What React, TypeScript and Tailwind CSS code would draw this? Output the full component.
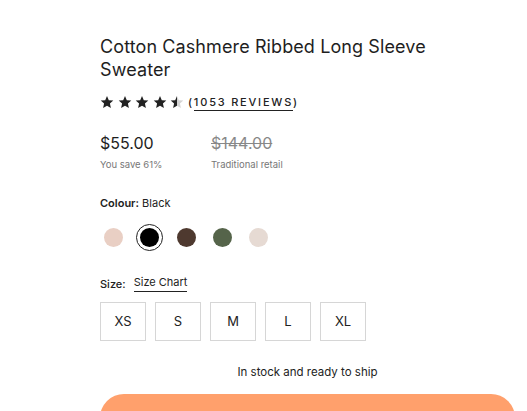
import React from "react";

const Star = ({ half = false }: { half?: boolean }) => (
  <svg width="14" height="14" viewBox="0 0 24 24">
    <defs>
      <linearGradient id="halfg">
        <stop offset="50%" stopColor="#222" />
        <stop offset="50%" stopColor="#d4d4d4" />
      </linearGradient>
    </defs>
    <path
      d="M12 1.8l3.1 7.1 7.7.7-5.8 5.1 1.7 7.6L12 18.3l-6.7 4 1.7-7.6-5.8-5.1 7.7-.7z"
      fill={half ? "url(#halfg)" : "#222"}
    />
  </svg>
);

export default function App() {
  const swatches = [
    { c: "#e9cfc4", sel: false },
    { c: "#000000", sel: true },
    { c: "#4e392f", sel: false },
    { c: "#55644a", sel: false },
    { c: "#e6dad3", sel: false },
  ];
  const sizes = ["XS", "S", "M", "L", "XL"];
  return (
    <div
      className="w-[527px] h-[411px] overflow-hidden bg-white text-[#222]"
      style={{ fontFamily: "Inter, 'Noto Sans', sans-serif" }}
    >
      <div className="ml-[100px] mr-[12px] pt-[35px]">
        <h1 className="text-[18px] leading-[23px] font-normal tracking-[0.1px] text-[#1e1e1e] pr-[60px]">
          Cotton Cashmere Ribbed Long Sleeve Sweater
        </h1>
        <div className="flex items-center mt-[13px] h-[16px]">
          <div className="flex gap-[3.5px]">
            <Star />
            <Star />
            <Star />
            <Star />
            <Star half />
          </div>
          <span className="ml-[4px] text-[11px] tracking-[1.8px] font-medium text-[#222]">
            (<span className="border-b border-[#222] pb-[1px]">1053 REVIEWS</span>)
          </span>
        </div>
        <div className="flex mt-[22px]">
          <div className="w-[111px]">
            <div className="text-[16px] leading-[22px] text-[#1e1e1e]">$55.00</div>
            <div className="text-[9.5px] leading-[14px] mt-[4px] text-[#777]">You save 61%</div>
          </div>
          <div>
            <div className="text-[16px] leading-[22px] text-[#888] line-through">$144.00</div>
            <div className="text-[9.5px] leading-[14px] mt-[4px] text-[#777]">Traditional retail</div>
          </div>
        </div>
        <div className="mt-[24px] text-[11px] leading-[14px]">
          <span className="font-semibold">Colour:</span> Black
        </div>
        <div className="flex items-center mt-[14px] gap-[9.25px]">
          {swatches.map((s, i) => (
            <div
              key={i}
              className={
                "w-[27px] h-[27px] rounded-full flex items-center justify-center " +
                (s.sel ? "border border-[#222]" : "")
              }
            >
              <div className="w-[19px] h-[19px] rounded-full" style={{ backgroundColor: s.c }} />
            </div>
          ))}
        </div>
        <div className="flex items-center mt-[24px] text-[11px] leading-[14px]">
          <span className="font-medium">Size:</span>
          <span className="ml-[8px] border-b border-[#222] pb-[2px]">Size Chart</span>
        </div>
        <div className="flex gap-[9px] mt-[10px]">
          {sizes.map((s) => (
            <div
              key={s}
              className="w-[46px] h-[39px] border border-[#d6d6d6] flex items-center justify-center text-[13px] text-[#222]"
            >
              {s}
            </div>
          ))}
        </div>
        <div className="text-center text-[11.5px] mt-[23px] leading-[16px] text-[#222]">
          In stock and ready to ship
        </div>
        <div className="mt-[14px] h-[50px] rounded-[24px] bg-[#ffa06c]" />
      </div>
    </div>
  );
}
